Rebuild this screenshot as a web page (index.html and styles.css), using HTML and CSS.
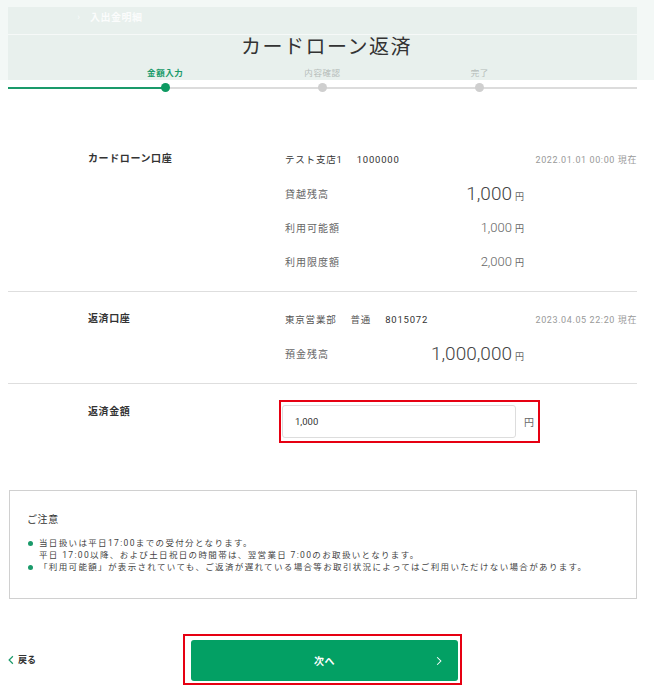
FILE: index.html
```html
<!DOCTYPE html>
<html lang="ja">
<head>
<meta charset="utf-8">
<title>カードローン返済</title>
<link rel="stylesheet" href="styles.css">
</head>
<body>
<header class="header">
  <div class="panel">
    <div class="nav"><span class="nav-arrow">›</span><span class="nav-text">入出金明細</span></div>
    <h1 class="title">カードローン返済</h1>
    <div class="steps">
      <span class="step active">金額入力</span>
      <span class="step">内容確認</span>
      <span class="step">完了</span>
    </div>
  </div>
</header>
<div class="page">
  <div class="track">
    <span class="dot active"></span>
    <span class="dot"></span>
    <span class="dot"></span>
  </div>

  <main class="main">
    <section class="sec bordered">
      <div class="sec-label">カードローン口座</div>
      <div class="sec-body">
        <div class="head-row">
          <span class="acct">テスト支店1<span class="sp"></span>1000000</span>
          <span class="date">2022.01.01 00:00 現在</span>
        </div>
        <div class="amt-row"><span class="amt-label">貸越残高</span><span class="amt big">1,000<span class="yen">円</span></span></div>
        <div class="amt-row"><span class="amt-label">利用可能額</span><span class="amt">1,000<span class="yen">円</span></span></div>
        <div class="amt-row"><span class="amt-label">利用限度額</span><span class="amt">2,000<span class="yen">円</span></span></div>
      </div>
    </section>

    <section class="sec bordered">
      <div class="sec-label">返済口座</div>
      <div class="sec-body">
        <div class="head-row">
          <span class="acct"><span class="gray">東京営業部<span class="sp"></span>普通</span><span class="sp"></span>8015072</span>
          <span class="date">2023.04.05 22:20 現在</span>
        </div>
        <div class="amt-row"><span class="amt-label">預金残高</span><span class="amt big">1,000,000<span class="yen">円</span></span></div>
      </div>
    </section>

    <section class="sec input-sec">
      <div class="sec-label top">返済金額</div>
      <div class="sec-body">
        <div class="highlight">
          <input class="amount-input" type="text" value="1,000">
          <span class="input-yen">円</span>
        </div>
      </div>
    </section>

    <div class="notice">
      <p class="notice-title">ご注意</p>
      <ul class="notice-list">
        <li>当日扱いは平日17:00までの受付分となります。<br>平日 17:00以降、および土日祝日の時間帯は、翌営業日 7:00のお取扱いとなります。</li>
        <li>「利用可能額」が表示されていても、ご返済が遅れている場合等お取引状況によってはご利用いただけない場合があります。</li>
      </ul>
    </div>

    <div class="footer">
      <a class="back" href="#"><svg class="back-icon" viewBox="0 0 8 12" width="6" height="10"><path d="M6.5 1 L1.5 6 L6.5 11" fill="none" stroke="#1a9a6a" stroke-width="1.6"/></svg>戻る</a>
      <div class="btn-frame">
        <button class="btn" type="button"><span>次へ</span><svg class="btn-icon" viewBox="0 0 8 12" width="6" height="10"><path d="M1.5 1 L6.5 6 L1.5 11" fill="none" stroke="#ffffff" stroke-width="1.4"/></svg></button>
      </div>
      <span></span>
    </div>
  </main>
</div>
</body>
</html>
```

FILE: styles.css
```css
* { box-sizing: border-box; }
body {
  margin: 0;
  background: #fff;
  font-family: Roboto, "Noto Sans CJK JP", sans-serif;
  color: #333;
}
.header {
  height: 80px;
  background: #f3f8f6;
  padding-top: 7px;
}
.panel {
  margin: 0 17px 0 8px;
  height: 73px;
  background: #e8f0ed;
}
.nav {
  height: 28px;
  display: flex;
  align-items: center;
  border-bottom: 1px solid rgba(255,255,255,0.6);
}
.nav-arrow {
  width: 76px;
  text-align: right;
  padding-right: 4px;
  color: rgba(255,255,255,0.8);
  font-size: 9px;
  margin-top: -8px;
}
.nav-text {
  color: rgba(255,255,255,0.85);
  font-size: 10px;
  font-weight: 700;
  letter-spacing: 0.5px;
  margin-left: 6px;
  margin-top: -8px;
}
.title {
  margin: 0;
  height: 24px;
  line-height: 24px;
  text-align: center;
  font-size: 20px;
  font-weight: 400;
  letter-spacing: 1.5px;
  color: #333;
  padding-left: 8px;
}
.steps, .track {
  display: grid;
  grid-template-columns: 12.5% 25% 25% 25% 12.5%;
}
.steps > :first-child, .track > :first-child { grid-column: 2; }
.steps {
  margin-top: 8px;
  line-height: 12px;
}
.step {
  text-align: center;
  font-size: 8.5px;
  letter-spacing: 0.6px;
  color: #b5bcb9;
}
.step.active {
  color: #1a9a6a;
  font-weight: 700;
}
.page {
  margin: 0 17px 0 8px;
}
.track {
  margin-top: 3px;
  height: 9px;
  justify-items: center;
  background:
    linear-gradient(#1a9a6a, #1a9a6a) no-repeat 0 50% / 25% 2px,
    linear-gradient(#dcdcdc, #dcdcdc) no-repeat 0 50% / 100% 2px;
}
.dot {
  width: 9px;
  height: 9px;
  border-radius: 50%;
  background: #cfcfcf;
}
.dot.active { background: #0e9a62; }

.main { padding-top: 40px; }
.sec {
  display: grid;
  grid-template-columns: 277px 1fr;
  padding: 10px 0 13px;
}
.sec.bordered { border-bottom: 1px solid #dedede; }
.sec-label {
  padding-left: 80px;
  line-height: 34px;
  font-size: 10px;
  font-weight: 700;
  letter-spacing: 0.6px;
  color: #333;
}
.head-row {
  height: 34px;
  display: flex;
  justify-content: space-between;
  align-items: center;
  font-size: 9.5px;
}
.acct {
  color: #333;
  letter-spacing: 0.8px;
}
.gray { color: #555; }
.sp { display: inline-block; width: 14px; }
.date {
  color: #999;
  font-size: 9px;
  letter-spacing: 0.6px;
}
.amt-row {
  width: 239px;
  height: 34px;
  display: flex;
  justify-content: space-between;
  align-items: center;
}
.amt-label {
  font-size: 10px;
  color: #666;
  letter-spacing: 1px;
}
.amt {
  font-size: 13px;
  color: #666;
  font-weight: 300;
  display: flex;
  align-items: baseline;
}
.amt.big {
  font-size: 19px;
  font-weight: 300;
  color: #444;
}
.yen {
  font-size: 9px;
  color: #666;
  margin-left: 3px;
  font-weight: 400;
}
.input-sec { padding-top: 16px; padding-bottom: 0; }
.sec-label.top { line-height: 24px; }
.highlight {
  margin-left: -6px;
  width: 261px;
  height: 43px;
  border: 2px solid #e60012;
  padding: 3px 4px 3px 1px;
  display: flex;
  align-items: center;
}
.amount-input {
  width: 236px;
  height: 33px;
  border: 1px solid #dddddd;
  border-radius: 3px;
  padding: 0 0 0 12px;
  font-family: Roboto, "Noto Sans CJK JP", sans-serif;
  font-size: 9.5px;
  color: #333;
  outline: none;
  background: #fff;
}
.input-yen {
  margin-left: 8px;
  font-size: 10px;
  color: #666;
}
.notice {
  margin-top: 47px;
  margin-left: 1px;
  border: 1px solid #d0d0d0;
  padding: 21px 18px 25px 17px;
}
.notice-title {
  margin: 0;
  line-height: 16px;
  font-size: 10px;
  color: #333;
  letter-spacing: 0.6px;
}
.notice-list {
  list-style: none;
  margin: 9px 0 0;
  padding: 0;
  font-size: 8.5px;
  line-height: 12px;
  letter-spacing: 1.35px;
  color: #444;
}
.notice-list li {
  position: relative;
  padding-left: 12px;
}
.notice-list li::before {
  content: "";
  position: absolute;
  left: 1px;
  top: 4px;
  width: 5px;
  height: 5px;
  border-radius: 50%;
  background: #1a9a6a;
}
.footer {
  margin-top: 35px;
  display: grid;
  grid-template-columns: 1fr auto 1fr;
  align-items: center;
}
.back {
  display: flex;
  align-items: center;
  gap: 4px;
  font-size: 9px;
  font-weight: 700;
  color: #333;
  text-decoration: none;
}
.btn-frame {
  border: 2px solid #e60012;
  padding: 4px 2px 2px 6px;
}
.btn {
  width: 267px;
  height: 41px;
  border: none;
  border-radius: 3px;
  background: #03a064;
  color: #fff;
  font-family: Roboto, "Noto Sans CJK JP", sans-serif;
  font-size: 10px;
  font-weight: 700;
  letter-spacing: 0.5px;
  display: flex;
  align-items: center;
  justify-content: center;
  position: relative;
  padding: 0;
}
.btn-icon {
  position: absolute;
  right: 16px;
  top: 16px;
}
```
